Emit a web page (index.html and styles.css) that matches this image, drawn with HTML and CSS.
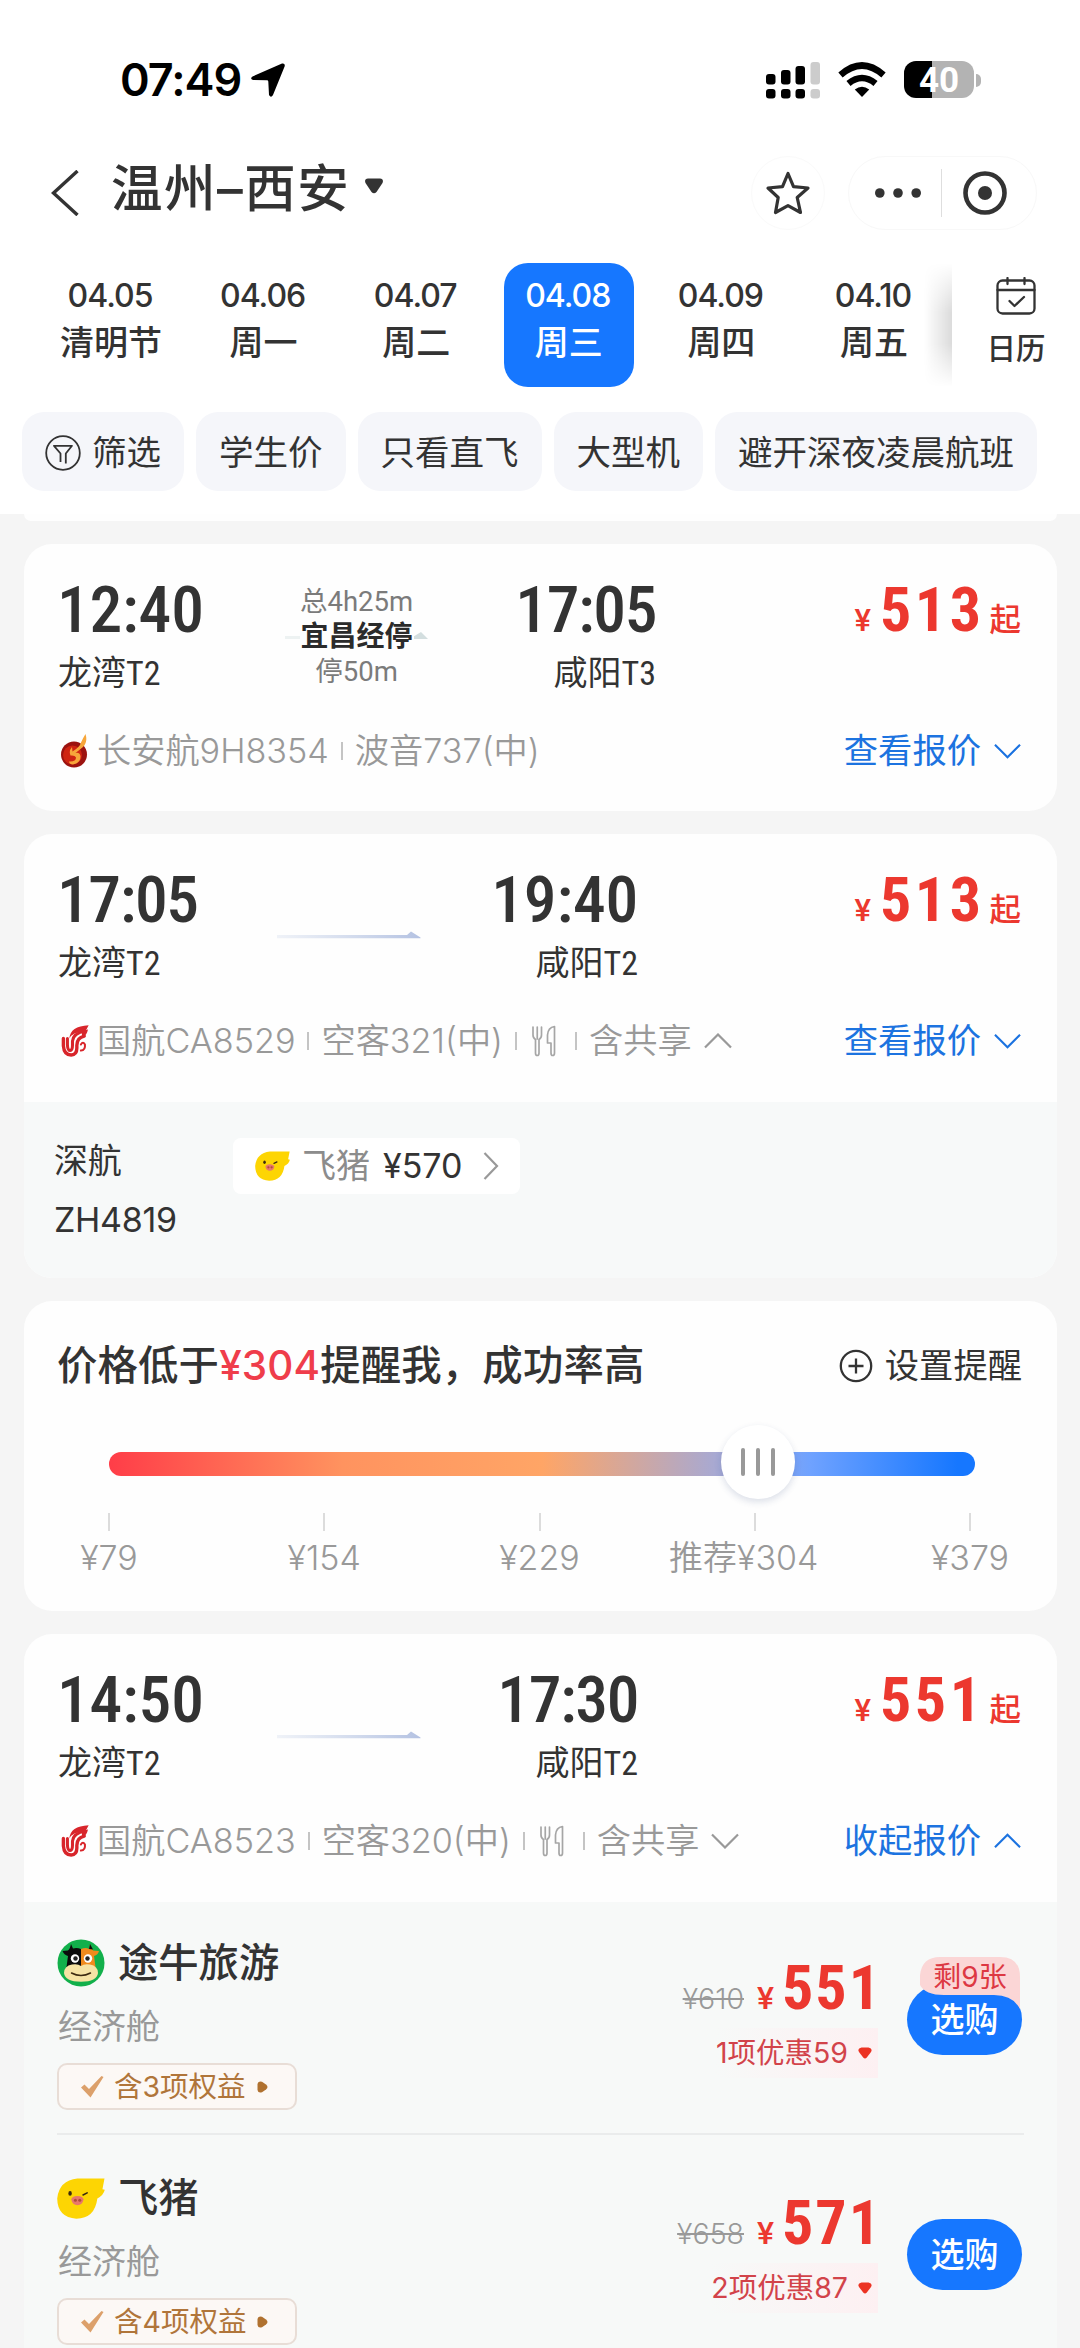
FILE: index.html
```
<!DOCTYPE html>
<html lang="zh-CN">
<head>
<meta charset="utf-8">
<title>温州–西安 航班</title>
<link rel="stylesheet" href="styles.css">
</head>
<body>
<svg class="defs" width="0" height="0" aria-hidden="true">
  <symbol id="airchina" viewBox="0 0 81 95">
    <g fill="none" stroke="#d8252b" stroke-linecap="round" stroke-width="10">
      <path d="M6 40V62Q8 89 29 89 46 88 46 68V60Q46 38 68 33"/>
      <path stroke-width="9" d="M18 40V60Q19 76 26 76 33 75 33 60V48Q35 25 70 18"/>
      <path stroke-width="6" d="M58 76Q72 74 70 58 64 48 58 58"/>
    </g>
    <path fill="#d8252b" d="M24 40Q26 4 81 1 78 12 66 20 34 20 24 40ZM60 16 79 13Q76 30 62 38Z"/>
  </symbol>
  <symbol id="cutlery" viewBox="0 0 26 32">
    <g fill="none" stroke="#a6a6a6" stroke-width="1.700" stroke-linejoin="round" stroke-linecap="round">
      <path d="M2 2V10Q2 13 4.500 14.500V28Q4.500 30.500 6.200 30.500 8 30.500 8 28V14.500Q10.500 13 10.500 10V2M6.250 2V14"/>
      <path d="M23.500 1.500V28Q23.500 30.500 21.700 30.500 20 30.500 20 28V18H16.500V10Q17 2.500 23.500 1.500Z"/>
    </g>
  </symbol>
  <symbol id="pig" viewBox="0 0 47 40">
    <path fill="#fdd503" d="M20 0.500H46.500L44.500 11 46.800 11.500Q45.500 17 39.500 20 37 39.500 19 39.800 0.500 38.500 0.200 20 2 2.500 20 .5Z"/>
    <path fill="#e8776a" d="M14 21Q14.500 17.500 20 17.500T26 21Q25 26.500 20 26.500T14 21Z"/>
    <g fill="#b04d38"><circle cx="18" cy="21.800" r="1.500"/><circle cx="22.300" cy="21.800" r="1.500"/></g>
    <ellipse cx="12.800" cy="15" rx="1.700" ry="2.400" fill="#3a2a10"/>
    <path fill="none" stroke="#3a2a10" stroke-width="1.600" stroke-linecap="round" d="M25.500 16.500 29.500 14.500"/>
  </symbol>
  <symbol id="down" viewBox="0 0 28 16">
    <path fill="none" stroke="currentColor" stroke-width="2.200" d="M1 1.500 14 14.500 27 1.500"/>
  </symbol>
  <symbol id="up" viewBox="0 0 28 16">
    <path fill="none" stroke="currentColor" stroke-width="2.200" d="M1 14.500 14 1.500 27 14.500"/>
  </symbol>
  <symbol id="tick" viewBox="0 0 23 22">
    <path fill="#dca06b" d="M0 11.500 3.500 8.500 8 13 20.500 0 22.500 1 9.500 21.500Z"/>
  </symbol>
  <symbol id="dot" viewBox="0 0 11 12">
    <path fill="#b0712f" d="M.5 3Q1-.5 5 .8L9 3.500Q12 6 9 8.500L5 11.300Q1 12.500.5 9Z"/>
  </symbol>
  <symbol id="drop" viewBox="0 0 14 12">
    <path fill="#ec3323" d="M3.500.5H10.500Q15 1.500 13 5L8.800 10.500Q7 12.500 5.200 10.500L1 5Q-1 1.500 3.500.5Z"/>
  </symbol>
  <defs><linearGradient id="fade"><stop offset="0" stop-color="#c3cfe6" stop-opacity=".25"/><stop offset="1" stop-color="#b4c2e2"/></linearGradient></defs>
  <symbol id="flightline" viewBox="0 0 144 8"><path fill="url(#fade)" d="M0 4H130L134 .5 143.500 6.500V7.200H0Z"/></symbol>
</svg>

<header class="top">
  <div class="status">
    <span class="clock">07:49</span>
    <svg class="nav-arrow" width="34" height="34" viewBox="0 0 34 34"><path d="M31 .6Q34.500 0 33.600 3.500L22 32Q20 35.500 18 32L17.300 18.500Q17.200 17.300 16 17.300L2 17Q-1.500 15.500 1.500 13.500Z"/></svg>
    <span class="grow"></span>
    <svg class="signal" width="54" height="37" viewBox="0 0 54 37">
      <rect x="0" y="12" width="9.500" height="10.500" rx="3"/><rect x="15" y="8" width="9.500" height="14.500" rx="3"/><rect x="29.500" y="4" width="9.500" height="18.500" rx="3"/><rect x="44.500" y="0" width="9.500" height="22.500" rx="3" fill="#ccc"/>
      <rect x="0" y="27" width="9.500" height="9.500" rx="3"/><rect x="15" y="27" width="9.500" height="9.500" rx="3"/><rect x="29.500" y="27" width="9.500" height="9.500" rx="3"/><rect x="44.500" y="27" width="9.500" height="9.500" rx="3" fill="#ccc"/>
    </svg>
    <svg class="wifi" width="48" height="36" viewBox="0 0 48 36">
      <g fill="none" stroke="#000"><path stroke-width="6.500" d="M2.500 13Q24-6 45.500 13"/><path stroke-width="6.500" d="M10.500 21.500Q24 10.500 37.500 21.500"/></g>
      <path d="M16.800 27.500Q24 22 31.200 27.500L24 35Z"/>
    </svg>
    <span class="battery"><span class="battery-num">40</span></span><span class="battery-cap"></span>
  </div>

  <div class="titlebar">
    <svg class="back" width="28" height="46" viewBox="0 0 28 46"><path fill="none" stroke="#333" stroke-width="3.400" d="M26.500 1 2.500 23 26.500 45"/></svg>
    <h1 class="route-title">温州–西安</h1>
    <svg class="caret" width="20" height="16" viewBox="0 0 20 16"><path fill="#333" d="M4 .5H16Q20 1 18.500 5L12.500 14Q10 16.500 7.500 14L1.500 5Q0 1 4 .5Z"/></svg>
    <span class="grow"></span>
    <span class="star-btn"><svg width="46" height="46" viewBox="0 0 46 46"><path fill="none" stroke="#333" stroke-width="3.200" stroke-linejoin="round" d="M23 3.500 28.500 16.700 43 18 32.200 27.500 35.500 42.500 23 35.600 10.500 42.500 13.200 27.500 3 18 17.500 16.700Z"/></svg></span>
    <span class="capsule">
      <svg width="46" height="10" viewBox="0 0 46 10" fill="#333"><circle cx="4.800" cy="5" r="4.800"/><circle cx="23" cy="5" r="4.800"/><circle cx="41.200" cy="5" r="4.800"/></svg>
      <i class="capsule-line"></i>
      <svg width="44" height="44" viewBox="0 0 44 44"><circle cx="22" cy="22" r="19.500" fill="none" stroke="#333" stroke-width="4.600"/><circle cx="22" cy="22" r="7" fill="#333"/></svg>
    </span>
  </div>

  <div class="dates">
    <div class="day"><b>04.05</b><span>清明节</span></div>
    <div class="day"><b>04.06</b><span>周一</span></div>
    <div class="day"><b>04.07</b><span>周二</span></div>
    <div class="day active"><b>04.08</b><span>周三</span></div>
    <div class="day"><b>04.09</b><span>周四</span></div>
    <div class="day"><b>04.10</b><span>周五</span></div>
    <div class="calendar">
      <svg width="40" height="38" viewBox="0 0 40 38"><g fill="none" stroke="#333" stroke-width="2.300" stroke-linecap="round" stroke-linejoin="round"><rect x="1.500" y="3.500" width="37" height="33" rx="5"/><path d="M1.500 13H38.500M11.500 1V7M28.500 1V7M13.500 24 18.500 29 28 20"/></g></svg>
      <span>日历</span>
    </div>
  </div>

  <nav class="filters">
    <span class="chip"><svg width="36" height="36" viewBox="0 0 36 36"><g fill="none" stroke="#333" stroke-width="1.800" stroke-linejoin="round"><circle cx="18" cy="18" r="16.800"/><path d="M15.500 27V18.500L9 10.800H27L20.800 18.500V28.500"/></g></svg>筛选</span>
    <span class="chip">学生价</span>
    <span class="chip">只看直飞</span>
    <span class="chip">大型机</span>
    <span class="chip">避开深夜凌晨航班</span>
  </nav>
</header>

<main class="list">
  <div class="card previous"></div>

  <section class="card flight stopover">
    <div class="trip">
      <div class="route">
        <div class="end"><b class="time">12:40</b><span class="airport">龙湾T2</span></div>
        <div class="mid">
          <span class="muted">总4h25m</span><strong>宜昌经停</strong><span class="muted">停50m</span>
          <i class="dash"></i><i class="arrowhead"></i>
        </div>
        <div class="end right"><b class="time tight">17:05</b><span class="airport">咸阳T3</span></div>
      </div>
      <div class="price"><i>¥</i><b>513</b><em>起</em></div>
    </div>
    <div class="plane">
      <svg class="logo" width="28" height="34" viewBox="0 0 28 34"><circle cx="13" cy="20.500" r="13" fill="#9c1310"/><circle cx="11.500" cy="21" r="9.500" fill="#cf2412"/><path fill="#f7a63a" d="M24.500 0Q27 8 22 13 17 17 14.500 19 18.500 18 19.500 22 20 29 12 30.500 8 30 8 27.500 15 28 15 23.500 14 21 9.500 21.500 7.500 17 11 13L11.500 17.500Q19 13 20 8.500 22 4 24.500 0Z"/></svg>
      <span class="txt">长安航9H8354</span><i class="sep"></i><span class="txt">波音737(中)</span>
      <span class="grow"></span>
      <a class="quote">查看报价<svg width="27" height="16"><use href="#down"/></svg></a>
    </div>
  </section>

  <section class="card">
    <div class="flight">
      <div class="trip">
        <div class="route">
          <div class="end"><b class="time tight">17:05</b><span class="airport">龙湾T2</span></div>
          <div class="mid"><svg class="line" width="144" height="8"><use href="#flightline"/></svg></div>
          <div class="end right"><b class="time">19:40</b><span class="airport">咸阳T2</span></div>
        </div>
        <div class="price"><i>¥</i><b>513</b><em>起</em></div>
      </div>
      <div class="plane">
        <svg class="logo" width="28" height="32"><use href="#airchina"/></svg>
        <span class="txt">国航CA8529</span><i class="sep"></i><span class="txt">空客321(中)</span><i class="sep"></i><svg class="meal" width="26" height="32"><use href="#cutlery"/></svg><i class="sep"></i><span class="txt">含共享</span><svg class="fold" width="28" height="16"><use href="#up"/></svg>
        <span class="grow"></span>
        <a class="quote">查看报价<svg width="27" height="16"><use href="#down"/></svg></a>
      </div>
    </div>
    <div class="shared">
      <div class="carrier"><span>深航</span><span>ZH4819</span></div>
      <div class="seller"><svg width="35" height="30"><use href="#pig"/></svg><span>飞猪</span><b>¥570</b><svg width="16" height="28" viewBox="0 0 16 28"><path fill="none" stroke="#999" stroke-width="2.200" d="M1.500 1 14 14 1.500 27"/></svg></div>
    </div>
  </section>

  <section class="card alert">
    <div class="alert-head">
      <h2>价格低于<span>¥304</span>提醒我，成功率高</h2>
      <a class="remind"><svg width="34" height="34" viewBox="0 0 34 34"><g fill="none" stroke="#333" stroke-width="2.300"><circle cx="17" cy="17" r="15.200"/><path d="M17 9.500V24.500M9.500 17H24.500"/></g></svg>设置提醒</a>
    </div>
    <div class="track"><span class="thumb"><i></i><i></i><i></i></span></div>
    <div class="scale">
      <div><i></i><span>¥79</span></div>
      <div><i></i><span>¥154</span></div>
      <div><i></i><span>¥229</span></div>
      <div><i></i><span class="recommended">推荐¥304</span></div>
      <div><i></i><span>¥379</span></div>
    </div>
  </section>

  <section class="card open">
    <div class="flight">
      <div class="trip">
        <div class="route">
          <div class="end"><b class="time">14:50</b><span class="airport">龙湾T2</span></div>
          <div class="mid"><svg class="line" width="144" height="8"><use href="#flightline"/></svg></div>
          <div class="end right"><b class="time tight">17:30</b><span class="airport">咸阳T2</span></div>
        </div>
        <div class="price"><i>¥</i><b>551</b><em>起</em></div>
      </div>
      <div class="plane">
        <svg class="logo" width="28" height="32"><use href="#airchina"/></svg>
        <span class="txt">国航CA8523</span><i class="sep"></i><span class="txt">空客320(中)</span><i class="sep"></i><svg class="meal" width="26" height="32"><use href="#cutlery"/></svg><i class="sep"></i><span class="txt">含共享</span><svg class="fold" width="28" height="16"><use href="#down"/></svg>
        <span class="grow"></span>
        <a class="quote">收起报价<svg width="27" height="16"><use href="#up"/></svg></a>
      </div>
    </div>
    <div class="offers">
      <div class="offer">
        <div class="agent">
          <div class="agent-name">
            <svg width="48" height="48" viewBox="0 0 48 48"><circle cx="24" cy="24" r="23.500" fill="#12b04b"/><path fill="#0b0b0b" d="M24 10Q20 8.500 16 9.500L14 5Q13 10 11 11.500L5.500 12Q7 16 11 17L9.500 28H24Z"/><path fill="#f08a1d" d="M24 10Q29 8 32 10L33 5.500Q35 10 36 11.500L42 12Q41 16 37 17L38.500 28H24Z"/><path fill="#0b0b0b" d="M32 10 33 5 36 10.500Z"/><path fill="#f6e3a4" d="M24 27Q27 24.500 33 25.500 41 27 41 34 40 42.500 24 42.800 8 42.500 7 34 7 27 15 25.500 21 24.500 24 27Z"/><g fill="#fff"><circle cx="18" cy="19.500" r="4.200"/><circle cx="31" cy="19.500" r="4.200"/></g><g fill="#222"><circle cx="18.500" cy="19.500" r="2.200"/><circle cx="30.500" cy="19.500" r="2.200"/></g><path fill="none" stroke="#3d2a10" stroke-width="1.500" stroke-linecap="round" d="M14.500 34Q24 39 33.500 34"/></svg>
            <span>途牛旅游</span>
          </div>
          <span class="cabin">经济舱</span>
          <span class="perks"><svg width="23" height="22"><use href="#tick"/></svg><span>含3项权益</span><svg width="11" height="12"><use href="#dot"/></svg></span>
        </div>
        <div class="fare">
          <div class="fare-line"><s>¥610</s><i>¥</i><b>551</b></div>
          <div class="discount"><span>1项优惠59</span><svg width="14" height="12"><use href="#drop"/></svg></div>
        </div>
        <div class="buy">选购<span class="left">剩9张</span></div>
      </div>
      <div class="offer">
        <div class="agent">
          <div class="agent-name">
            <svg width="48" height="41"><use href="#pig"/></svg>
            <span>飞猪</span>
          </div>
          <span class="cabin">经济舱</span>
          <span class="perks"><svg width="23" height="22"><use href="#tick"/></svg><span>含4项权益</span><svg width="11" height="12"><use href="#dot"/></svg></span>
        </div>
        <div class="fare">
          <div class="fare-line"><s>¥658</s><i>¥</i><b>571</b></div>
          <div class="discount"><span>2项优惠87</span><svg width="14" height="12"><use href="#drop"/></svg></div>
        </div>
        <div class="buy">选购</div>
      </div>
    </div>
  </section>
</main>
</body>
</html>
```
FILE: styles.css
```
* { box-sizing: border-box; }

body {
  margin: 0;
  width: 1080px;
  height: 2348px;
  overflow: hidden;
  background: #f5f5f5;
  color: #333;
  font: 400 34.5px/44px Inter, "Noto Sans CJK SC", sans-serif;
  white-space: nowrap;
}

i, em { font-style: normal; }
svg { display: block; flex: none; }
.defs { position: absolute; }
.grow { flex: 1; }

/* header */
.top { height: 514px; background: #fff; }

.status { display: flex; align-items: center; height: 130px; padding: 30px 99px 0 120px; }
.clock { color: #000; font-size: 45px; font-weight: 600; letter-spacing: -1px; }
.nav-arrow { margin-left: 10px; }
.wifi { margin: 0 18px; }
.battery {
  display: flex; justify-content: center; align-items: center;
  width: 70px; height: 37px; margin-top: -1px; border-radius: 12px;
  background: linear-gradient(to right, #000 40%, #b3b3b3 40%);
}
.battery-num { padding-top: 2px; color: #fff; font: 700 35px/37px Roboto, sans-serif; }
.battery-cap { width: 5px; height: 13px; margin-left: 2px; border-radius: 0 5px 5px 0; background: #b3b3b3; }

.titlebar { display: flex; align-items: center; height: 133px; padding: 0 43px 8px 51px; }
.back { margin-top: 1px; }
.route-title { margin: -9px 0 0 32px; font-size: 51.500px; line-height: 60px; font-weight: 500; letter-spacing: 1.500px; }
.caret { margin: -13px 0 0 14px; }
.star-btn { display: flex; align-items: center; justify-content: center; width: 74px; height: 74px; margin-right: 23px; border: 1px solid #fafafa; border-radius: 50%; }
.capsule { display: flex; align-items: center; width: 189px; height: 74px; padding-left: 26px; border: 1px solid #f8f8f8; border-radius: 37px; }
.capsule-line { width: 1px; height: 48px; margin: 0 21px 0 20px; background: #dedede; }

.dates { display: flex; height: 124px; padding-left: 34px; position: relative; }
.day { display: flex; flex-direction: column; align-items: center; width: 130px; margin: 0 11.300px; padding-top: 10px; border-radius: 24px; }
.day:first-child { margin-left: 12px; }
.day b { margin-left: -2px; font-size: 32px; font-weight: 450; line-height: 46px; letter-spacing: -1px; }
.day span { font-size: 34px; font-weight: 500; line-height: 48px; }
.day.active { background: #1677ff; color: #fff; }
.day.active b { font-weight: 500; }
.calendar {
  position: absolute; right: 0; top: 0;
  display: flex; flex-direction: column; align-items: center;
  width: 128px; height: 124px; padding: 14px 0 0; background: #fff;
}
.calendar::before {
  content: ""; position: absolute; right: 100%; top: 0; width: 28px; height: 124px;
  background: linear-gradient(to right, transparent, rgba(0,0,0,.14));
  -webkit-mask-image: linear-gradient(transparent, #000 40%, #000 65%, transparent);
  mask-image: linear-gradient(transparent, #000 40%, #000 65%, transparent);
}
.calendar span { margin-top: 13px; font-size: 29.500px; font-weight: 500; line-height: 40px; }

.filters { display: flex; gap: 12px; padding: 25px 0 0 22px; }
.chip { display: flex; align-items: center; gap: 11px; height: 79px; padding: 2px 23px 0; border-radius: 22px; background: #f5f6fa; }

/* cards */
.list { padding: 0 23px 0 24px; }
.card { margin-bottom: 23px; border-radius: 28px; background: #fefefe; overflow: hidden; }
.card.previous { height: 7px; border-radius: 0 0 28px 28px; }

.flight { height: 268px; padding: 32px 36px 0 34px; }
.flight.stopover { height: 267px; }
.trip { display: flex; justify-content: space-between; }
.route { display: grid; grid-template-columns: 219px 143px 218px; height: 119px; }
.stopover .route { grid-template-columns: 227px 143px 228px; }
.end { display: flex; flex-direction: column; align-items: flex-start; }
.end.right { align-items: flex-end; }
.time { margin-left: -1px; font: 500 65.500px/68px Roboto, sans-serif; font-stretch: 75%; letter-spacing: -.2px; }
.time.tight { letter-spacing: -1.400px; }
.airport { margin-top: 7px; font: 400 34px/44px Roboto, "Noto Sans CJK SC", sans-serif; font-stretch: 84%; }
.mid { position: relative; display: flex; flex-direction: column; align-items: center; padding-top: 8px; font: 400 27.500px/35px Roboto, "Noto Sans CJK SC", sans-serif; }
.mid strong { font-weight: 700; color: #2b2b2b; font-size: 28px; }
.muted { color: #7b7b7b; }
.line { margin-top: 57px; }
.dash, .arrowhead { position: absolute; top: 60px; height: 3px; background: #edf2f2; }
.dash { left: 0; width: 15px; }
.arrowhead { right: 0; top: 56px; width: 14px; height: 7px; background: #d3dedf; clip-path: polygon(0 60%, 50% 0, 100% 100%, 0 100%); }

.price { display: flex; align-items: baseline; height: 68px; color: #ec382f; }
.price i { font: 500 31px/68px Roboto, sans-serif; }
.price b { margin-left: 9px; font: 700 62px/68px Roboto, sans-serif; font-stretch: 75%; letter-spacing: 3.500px; }
.price em { margin-left: 5px; font-size: 31.500px; font-weight: 500; }

.plane { display: flex; align-items: center; height: 44px; margin-top: 34px; color: #999; }
.logo { margin: 0 8px 0 3px; }
.txt { font-size: 34.200px; font-weight: 350; }
.sep { width: 2px; height: 18px; margin: 0 12px; background: #c4c4c4; }
.meal { margin: 0 6px 0 2px; }
.fold { margin-left: 12px; }
.quote { display: flex; align-items: center; gap: 13px; color: #1c73e0; font-size: 34.300px; }

.shared { display: flex; height: 176px; padding: 37px 32px 0 30px; background: #f7f9f9; }
.carrier { display: flex; flex-direction: column; gap: 16px; width: 179px; font-size: 34px; line-height: 43px; letter-spacing: -.3px; }
.seller { display: flex; align-items: center; width: 287px; height: 56px; margin-top: -1px; padding-left: 22px; border-radius: 8px; background: #fff; font-size: 34px; color: #8c8c8c; }
.seller span { margin: 0 13px 0 12px; }
.seller b { font-weight: 400; color: #333; margin-right: 20px; }

.alert { height: 310px; }
.alert-head { display: flex; justify-content: space-between; align-items: center; height: 130px; padding: 0 35px 0 33px; }
.alert h2 { margin: 0; font-size: 40.400px; font-weight: 500; letter-spacing: .15px; }
.alert h2 span { color: #ef3d4b; }
.remind { display: flex; align-items: center; gap: 12px; font-size: 34.300px; }
.track {
  position: relative; width: 866px; height: 24px; margin: 21px 0 0 85px; border-radius: 12px;
  background: linear-gradient(to right, #ff3d48, #ff935f 27%, #ffa566 50%, #a8a9d2 70%, #6fa2ff 81%, #1677ff 98%);
}
.thumb {
  position: absolute; left: 612px; top: -27px; display: flex; justify-content: center; align-items: center; gap: 11px;
  width: 74px; height: 74px; border-radius: 50%; background: #fff; box-shadow: 0 3px 7px rgba(40,60,120,.16);
}
.thumb i { width: 4px; height: 28px; border-radius: 2px; background: #999; }
.scale { display: flex; justify-content: space-between; width: 863px; margin: 37px 0 0 84px; color: #999; font-size: 34px; font-weight: 350; }
.scale div { display: flex; flex-direction: column; align-items: center; width: 2px; }
.scale i { width: 2px; height: 18px; background: #dcdcdc; }
.scale span { margin-top: 5px; }
.recommended { margin-right: 22px; }

.open { margin: 1px 0 0; border-radius: 28px 28px 0 0; }
.offers { padding: 0 33px; background: #f7f9f8; }
.offer { display: flex; align-items: flex-start; height: 233px; margin-bottom: 2px; border-bottom: 2px solid #eaecec; }
.agent { flex: 1; display: flex; flex-direction: column; align-items: flex-start; padding-top: 35px; }
.agent-name { display: flex; align-items: center; gap: 13px; height: 52px; font-size: 40.300px; font-weight: 500; }
.cabin { margin: 16px 0 0 1px; height: 46px; font-size: 34px; color: #999; }
.perks { display: flex; align-items: center; width: 240px; height: 47px; margin-top: 12px; padding-left: 22px; border: 2px solid #e8ddd6; border-radius: 10px; background: #fcf8f5; color: #b0753a; font-size: 28.500px; }
.perks span { margin: 0 11px 0 10px; }
.fare { display: flex; flex-direction: column; align-items: flex-end; padding-top: 52px; }
.fare-line { display: flex; align-items: baseline; height: 68px; margin-right: -4px; color: #ec382f; }
.fare-line s { color: #999; font-size: 28.500px; font-weight: 350; }
.fare-line i { margin-left: 13px; font: 500 32px/68px Roboto, sans-serif; }
.fare-line b { margin-left: 8px; font: 700 62px/68px Roboto, sans-serif; font-stretch: 75%; letter-spacing: 2px; }
.discount { display: flex; align-items: center; gap: 10px; height: 50px; margin-top: 6px; padding-right: 6px; background: linear-gradient(to right, transparent, #fdf0f2); color: #d2434a; font-size: 28.500px; }
.buy { position: relative; width: 115px; height: 71px; margin: 82px 2px 0 29px; border-radius: 36px; background: #1677ff; color: #fff; font-size: 34px; font-weight: 500; line-height: 71px; text-align: center; }
.left {
  position: absolute; right: 2px; top: -27px; width: 100px; height: 52px;
  background: #fbd6d6; color: #dd3843; font-size: 28px; font-weight: 400; line-height: 40px;
  clip-path: path("M20 0H80Q100 0 100 20V52Q93 38 74 38H24Q5 38 0 28V18Q2 0 20 0Z");
}
```
